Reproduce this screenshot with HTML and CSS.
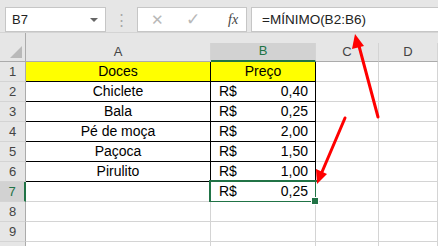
FILE: index.html
```html
<!DOCTYPE html>
<html lang="pt">
<head>
  <meta charset="UTF-8" />
  <title>Planilha</title>
  <link rel="stylesheet" href="styles.css">
</head>
<body>

  <div class="window">
    <!-- Formula bar -->
    <div class="formula-bar">
      <div class="name-box">
        <span>B7</span>
        <span class="caret"></span>
      </div>
      <div class="grip">⋮</div>
      <div class="actions">
        <span class="cancel">✕</span>
        <span class="enter">✓</span>
        <span class="fx">fx</span>
      </div>
      <div class="formula">=MÍNIMO(B2:B6)</div>
    </div>

    <!-- Sheet -->
    <div class="sheet">
      <div class="hdr corner"><span class="tri"></span></div>
      <div class="hdr">A</div>
      <div class="hdr active-col">B</div>
      <div class="hdr">C</div>
      <div class="hdr">D</div>

      <div class="rownum">1</div>
      <div class="cell t title">Doces</div>
      <div class="cell t tb title">Preço</div>
      <div class="cell"></div>
      <div class="cell"></div>

      <div class="rownum">2</div>
      <div class="cell t">Chiclete</div>
      <div class="cell t tb money"><span>R$</span><span>0,40</span></div>
      <div class="cell"></div>
      <div class="cell"></div>

      <div class="rownum">3</div>
      <div class="cell t">Bala</div>
      <div class="cell t tb money"><span>R$</span><span>0,25</span></div>
      <div class="cell"></div>
      <div class="cell"></div>

      <div class="rownum">4</div>
      <div class="cell t">Pé de moça</div>
      <div class="cell t tb money"><span>R$</span><span>2,00</span></div>
      <div class="cell"></div>
      <div class="cell"></div>

      <div class="rownum">5</div>
      <div class="cell t">Paçoca</div>
      <div class="cell t tb money"><span>R$</span><span>1,50</span></div>
      <div class="cell"></div>
      <div class="cell"></div>

      <div class="rownum">6</div>
      <div class="cell t">Pirulito</div>
      <div class="cell t tb money"><span>R$</span><span>1,00</span></div>
      <div class="cell"></div>
      <div class="cell"></div>

      <div class="rownum active-row">7</div>
      <div class="cell"></div>
      <div class="cell t tb money selected"><span>R$</span><span>0,25</span></div>
      <div class="cell"></div>
      <div class="cell"></div>

      <div class="rownum">8</div>
      <div class="cell"></div>
      <div class="cell"></div>
      <div class="cell"></div>
      <div class="cell"></div>

      <div class="rownum">9</div>
      <div class="cell"></div>
      <div class="cell"></div>
      <div class="cell"></div>
      <div class="cell"></div>

      <div class="rownum"></div>
      <div class="cell"></div>
      <div class="cell"></div>
      <div class="cell"></div>
      <div class="cell"></div>
    </div>

    <!-- Red arrows drawn over the sheet -->
    <svg class="arrows" width="438" height="246" viewBox="0 0 438 246">
      <line x1="378" y1="117" x2="359" y2="46" stroke="#ff0000" stroke-width="3" stroke-linecap="round"/>
      <polygon points="355,34 352,49 364,46" fill="#ff0000"/>
      <line x1="345" y1="118" x2="322" y2="172" stroke="#ff0000" stroke-width="3" stroke-linecap="round"/>
      <polygon points="317,184 316,169 327,174" fill="#ff0000"/>
    </svg>
  </div>

</body>
</html>
```

FILE: styles.css
```css
body {
  margin: 0;
  background: #fff;
  font-family: 'Liberation Sans', Arial, sans-serif;
  color: #000;
}

.window {
  position: relative;
  width: 438px;
  height: 246px;
  overflow: hidden;
}

/* Formula bar */
.formula-bar {
  height: 33px;
  box-sizing: border-box;
  background: #e6e6e6;
  border-bottom: 1px solid #d4d4d4;
  display: flex;
  align-items: flex-start;
  padding: 7px 0 0 5px;
}

.name-box {
  width: 101px;
  height: 25px;
  box-sizing: border-box;
  background: #fff;
  border: 1px solid #c6c6c6;
  display: flex;
  align-items: center;
  justify-content: space-between;
  padding: 0 7px 0 6px;
  font-size: 13px;
  color: #222;
}

.caret {
  width: 0;
  height: 0;
  border-left: 4px solid transparent;
  border-right: 4px solid transparent;
  border-top: 4px solid #666;
}

.grip {
  width: 31px;
  text-align: center;
  color: #a8a8a8;
  font-size: 15px;
  line-height: 25px;
}

.actions {
  width: 110px;
  height: 25px;
  box-sizing: border-box;
  background: #fff;
  border: 1px solid #c6c6c6;
  display: flex;
  align-items: center;
  padding-left: 13px;
}

.cancel, .enter {
  color: #b8b8b8;
  font-size: 15px;
  width: 35px;
}

.enter {
  font-size: 17px;
  width: 42px;
}

.fx {
  font-family: 'Liberation Serif', serif;
  font-style: italic;
  font-size: 14px;
  color: #444;
}

.formula {
  flex: 1;
  height: 25px;
  box-sizing: border-box;
  margin-left: 4px;
  background: #fff;
  border: 1px solid #c6c6c6;
  border-right: none;
  padding-left: 10px;
  font-size: 13.5px;
  line-height: 23px;
  color: #222;
}

/* Sheet grid */
.sheet {
  display: grid;
  grid-template-columns: 26px 185px 105px 63px 1fr;
  grid-template-rows: 29px repeat(10, 20px);
  background: #e6e6e6;
}

.hdr {
  background: #e6e6e6;
  border-right: 1px solid #ababab;
  border-bottom: 1px solid #ababab;
  box-sizing: border-box;
  display: flex;
  align-items: flex-end;
  justify-content: center;
  font-size: 13px;
  line-height: 19px;
  color: #444;
  position: relative;
}

.hdr:not(.corner) {
  border-right-color: #d4d4d4;
  margin-top: 10px;
}

.tri {
  position: absolute;
  right: 3px;
  bottom: 3px;
  width: 0;
  height: 0;
  border-left: 12px solid transparent;
  border-bottom: 12px solid #b9b9b9;
}

.active-col {
  background: #d2d2d2;
  color: #217346;
  border-bottom: 2px solid #217346;
}

.rownum {
  background: #e6e6e6;
  border-right: 1px solid #ababab;
  border-bottom: 1px solid #d4d4d4;
  box-sizing: border-box;
  text-align: center;
  font-size: 13px;
  line-height: 19px;
  color: #444;
}

.active-row {
  background: #d2d2d2;
  color: #217346;
  border-right: 2px solid #217346;
}

.cell {
  background: #fff;
  border-right: 1px solid #d4d4d4;
  border-bottom: 1px solid #d4d4d4;
  box-sizing: border-box;
  font-size: 14px;
  line-height: 19px;
  position: relative;
}

.cell.t {
  text-align: center;
  border-right-color: #000;
  border-bottom-color: #000;
}

.title {
  background: #ffff00;
}

.money {
  display: flex;
  justify-content: space-between;
  padding: 0 7px 0 8px;
}

.selected::after {
  content: "";
  position: absolute;
  left: -2px;
  top: -2px;
  right: -2px;
  bottom: -2px;
  border: 2px solid #217346;
}

.selected::before {
  content: "";
  position: absolute;
  right: -4px;
  bottom: -4px;
  width: 6px;
  height: 6px;
  background: #217346;
  border: 1px solid #fff;
  z-index: 1;
}

.arrows {
  position: absolute;
  left: 0;
  top: 0;
}
```
